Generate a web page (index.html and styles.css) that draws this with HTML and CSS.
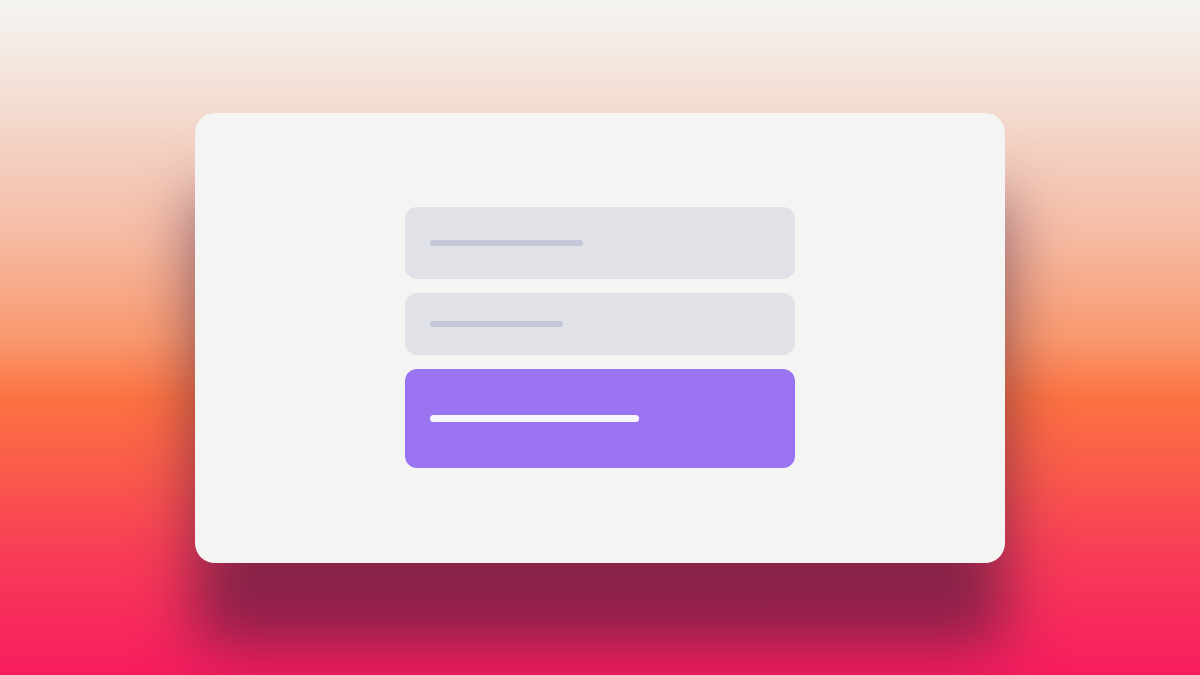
FILE: index.html
```html
<!DOCTYPE html>
<html lang="en">
<head>
<meta charset="utf-8">
<title>Form skeleton</title>
<link rel="stylesheet" href="styles.css">
</head>
<body>
  <main class="stage">
    <section class="card">
      <div class="form">
        <div class="field field-tall"><span class="bar bar-gray bar-1"></span></div>
        <div class="field field-short"><span class="bar bar-gray bar-2"></span></div>
        <div class="button"><span class="bar bar-white bar-3"></span></div>
      </div>
    </section>
  </main>
</body>
</html>
```
FILE: styles.css
```css
html, body {
  margin: 0;
  padding: 0;
  width: 1200px;
  height: 675px;
  overflow: hidden;
  font-family: "Inter", "Liberation Sans", sans-serif;
}
.stage {
  width: 1200px;
  height: 675px;
  display: flex;
  align-items: center;
  justify-content: center;
  background: linear-gradient(180deg,
    #f4f4f2 0%,
    #f4ebe4 7%,
    #f3d4c7 20%,
    #f6bba4 35%,
    #f9996f 50%,
    #fc7242 59%,
    #fa5a4b 70%,
    #f83d57 82%,
    #f71c5f 100%);
}
.card {
  width: 810px;
  height: 450px;
  box-sizing: border-box;
  background: #f4f4f2;
  border-radius: 20px;
  box-shadow: 0 82px 60px rgba(50, 20, 60, 0.56);
  display: flex;
  align-items: center;
  justify-content: center;
}
.form {
  width: 390px;
  display: flex;
  flex-direction: column;
  gap: 14px;
}
.field, .button {
  border-radius: 12px;
  display: flex;
  align-items: center;
  padding-left: 25px;
}
.field {
  background: #e1e2e8;
}
.field-tall { height: 72px; }
.field-short { height: 62px; }
.button {
  height: 99px;
  background: #9a74f0;
}
.bar {
  display: block;
  height: 6px;
  border-radius: 3px;
}
.bar-gray { background: #c2c8d9; }
.bar-white { background: #f8f5ff; height: 7px; border-radius: 4px; }
.bar-1 { width: 153px; }
.bar-2 { width: 133px; }
.bar-3 { width: 209px; }
```
